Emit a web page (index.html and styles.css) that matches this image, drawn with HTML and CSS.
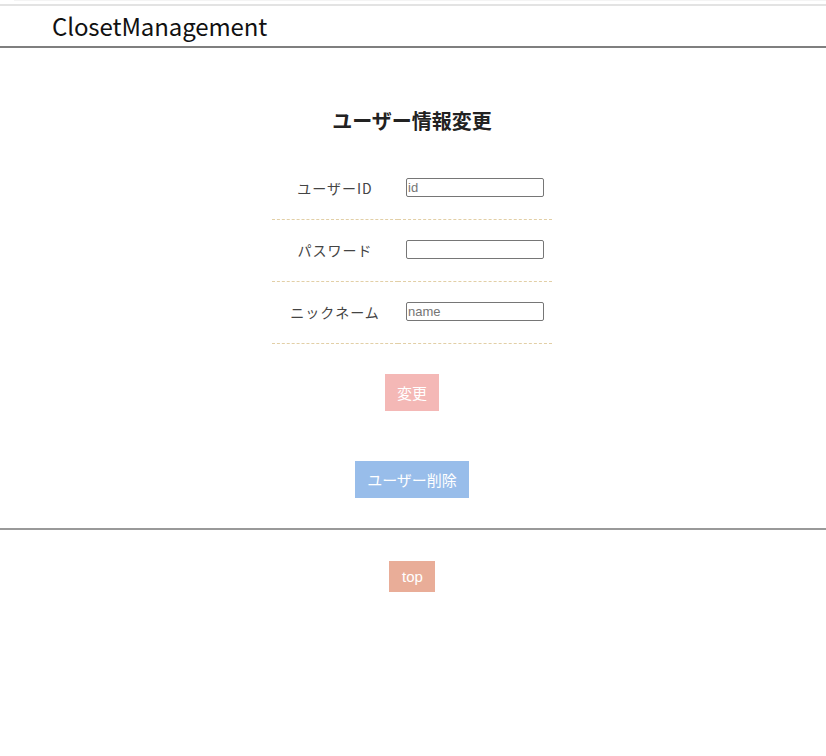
FILE: index.html
```html
<!DOCTYPE html>
<html lang="ja">
<head>
<meta charset="utf-8">
<title>ClosetManagement</title>
<link rel="stylesheet" href="styles.css">
</head>
<body>
<div class="topline"></div>
<header class="site-header">
  <h1 class="logo">ClosetManagement</h1>
</header>
<main class="main">
  <h2 class="page-title">ユーザー情報変更</h2>
  <form class="form">
    <table class="form-table">
      <tr>
        <th>ユーザーID</th>
        <td><input type="text" placeholder="id"></td>
      </tr>
      <tr>
        <th>パスワード</th>
        <td><input type="password"></td>
      </tr>
      <tr>
        <th>ニックネーム</th>
        <td><input type="text" placeholder="name"></td>
      </tr>
    </table>
    <div class="btn-row btn-row-update"><button type="button" class="btn btn-update">変更</button></div>
    <div class="btn-row btn-row-delete"><button type="button" class="btn btn-delete">ユーザー削除</button></div>
  </form>
</main>
<footer class="site-footer">
  <a class="btn btn-top" href="#">top</a>
</footer>
</body>
</html>
```
FILE: styles.css
```css
html, body {
  margin: 0;
  padding: 0;
  background: #fff;
}
body {
  font-family: "Noto Sans CJK JP", "Noto Sans", sans-serif;
  color: #333;
}
.topline {
  height: 1px;
  margin-left: 14px;
  background: #f4f4f4;
  margin-bottom: 3px;
}
.site-header {
  border-top: 2px solid #e3e3e3;
  border-bottom: 2px solid #7f7f7f;
  height: 40px;
  padding-left: 52px;
}
.logo {
  margin: 0;
  font-weight: normal;
  font-size: 24px;
  line-height: 40px;
  color: #111;
  letter-spacing: -0.1px;
}
.main {
  padding-top: 58px;
  padding-right: 2px;
}
.page-title {
  margin: 0;
  text-align: center;
  font-size: 20px;
  line-height: 30px;
  font-weight: bold;
  color: #222;
}
.form {
  margin-top: 22px;
}
.form-table {
  margin: 0 auto;
  width: 280px;
  border-collapse: collapse;
}
.form-table th,
.form-table td {
  height: 59px;
  padding: 0;
  border-bottom: 1px dashed #e2cfa6;
}
.form-table th {
  width: 126px;
  font-weight: normal;
  font-size: 14px;
  letter-spacing: 1px;
  color: #444;
  text-align: center;
  vertical-align: middle;
  padding-bottom: 2px;
}
.form-table td {
  padding-left: 8px;
  padding-bottom: 2px;
  vertical-align: middle;
}
.form-table input {
  box-sizing: border-box;
  width: 138px;
  height: 19px;
  border: 1px solid #767676;
  border-radius: 2px;
  padding: 0 1px;
  font-family: "Liberation Sans", Arial, sans-serif;
  font-size: 13px;
  display: block;
}
.form-table input::placeholder {
  color: #757575;
}
.btn-row {
  display: flex;
  justify-content: center;
}
.btn-row-update {
  margin-top: 30px;
}
.btn-row-delete {
  margin-top: 50px;
}
.btn {
  border: none;
  color: #fff;
  font-family: "Noto Sans CJK JP", sans-serif;
  font-size: 15px;
  height: 37px;
  padding: 0 12px;
  cursor: pointer;
}
.btn-update {
  background: #f4b8b6;
}
.btn-delete {
  background: #98bdea;
}
.site-footer {
  margin-top: 30px;
  border-top: 2px solid #999;
  display: flex;
  justify-content: center;
  padding-top: 31px;
  padding-right: 2px;
}
.btn-top {
  display: block;
  height: 31px;
  line-height: 31px;
  padding: 0 12px 0 13px;
  font-size: 15px;
  background: #e9ad98;
  text-decoration: none;
  font-family: "Liberation Sans", Arial, sans-serif;
}
```
